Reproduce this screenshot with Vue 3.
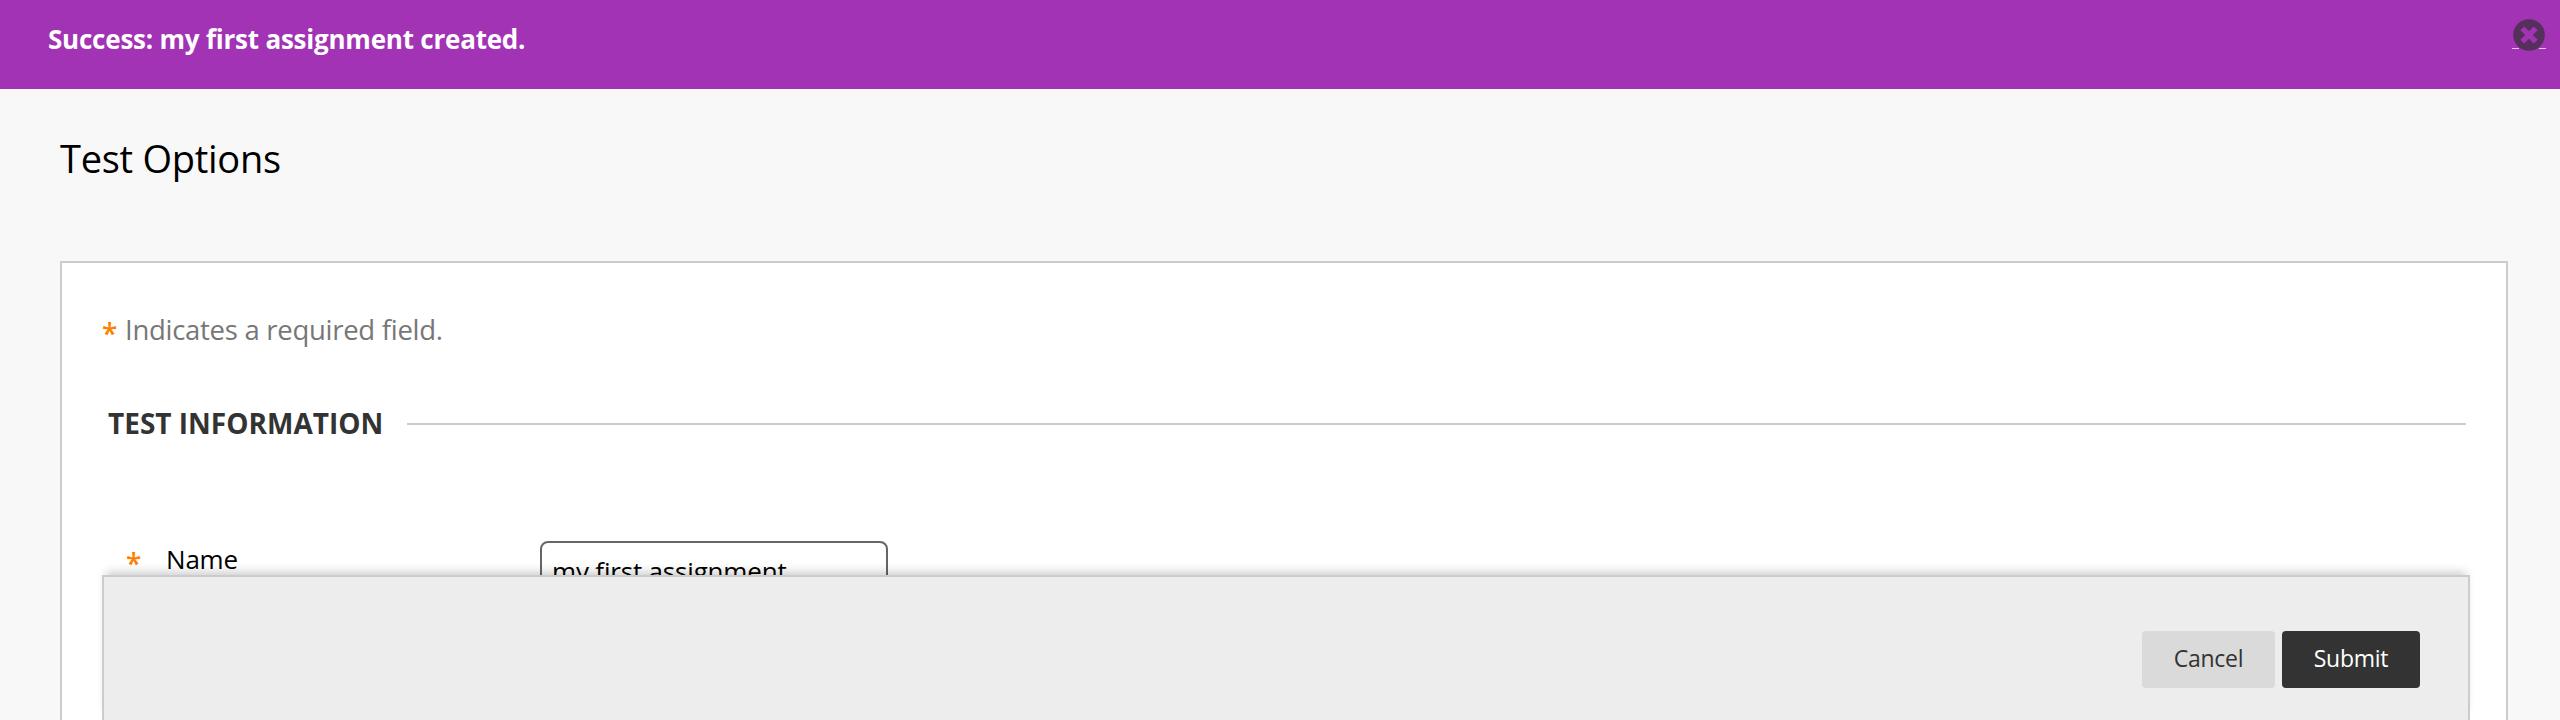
<script setup>
import { ref } from 'vue'

const name = ref('my first assignment')
</script>

<template>
  <div class="page">
    <header class="notice">
      <p class="notice-text">Success: my first assignment created.</p>
      <a class="close" aria-label="Close">
        <svg width="34" height="32" viewBox="0 0 34 32">
          <path d="M0 29.5H34" stroke="#e3c3e8" stroke-width="1" />
          <path d="M7 29.5H27" stroke="#a233b5" stroke-width="2" />
          <circle cx="17" cy="16" r="15.8" fill="#55305c" />
          <path d="M10.3 9.3L23.7 22.7M23.7 9.3L10.3 22.7" stroke="#a233b5" stroke-width="5.4" />
        </svg>
      </a>
    </header>
    <main class="content">
      <h1 class="title">Test Options</h1>
      <section class="card">
        <p class="required"><span class="star">*</span><span class="required-text">Indicates a required field.</span></p>
        <div class="section-head">
          <h2 class="section-title">TEST INFORMATION</h2>
          <span class="rule"></span>
        </div>
        <div class="field">
          <span class="star field-star">*</span>
          <span class="label">Name</span>
          <div class="input">{{ name }}</div>
        </div>
      </section>
    </main>
    <footer class="actions">
      <button class="btn cancel">Cancel</button>
      <button class="btn submit">Submit</button>
    </footer>
  </div>
</template>

<style>
body {
  margin: 0;
  overflow: hidden;
}
</style>

<style scoped>
.page {
  position: relative;
  box-sizing: border-box;
  height: 720px;
  overflow: hidden;
  display: flex;
  flex-direction: column;
  background: #f8f8f8;
  color: #000;
  font-family: "Open Sans", sans-serif;
}
p, h1, h2 {
  margin: 0;
}
.notice {
  box-sizing: border-box;
  height: 89px;
  flex: none;
  display: flex;
  justify-content: space-between;
  align-items: flex-start;
  padding: 20px 14px 0 48px;
  background: #a233b5;
}
.notice-text {
  color: #fff;
  font-size: 26px;
  font-weight: 700;
  line-height: 38px;
  letter-spacing: -0.22px;
  white-space: nowrap;
}
.close {
  display: flex;
  margin-top: -1px;
}
.content {
  flex: 1;
  display: flex;
  flex-direction: column;
  padding: 43px 52px 0 60px;
}
.title {
  font-size: 38px;
  font-weight: 400;
  line-height: 52px;
  letter-spacing: -0.27px;
  margin-bottom: 77px;
}
.card {
  flex: 1;
  border: 2px solid #ccc;
  border-bottom: 0;
  background: #fff;
  padding: 46px 40px 0;
}
.required {
  display: flex;
  font-size: 27.5px;
  line-height: 40px;
  height: 40px;
  letter-spacing: -0.28px;
  color: #777;
}
.required-text {
  padding-top: 1px;
}
.star {
  color: #ff8000;
  font-size: 28px;
  font-weight: 600;
  letter-spacing: 0;
  width: 23px;
  height: 36px;
  padding-top: 4px;
}
.section-head {
  display: flex;
  align-items: center;
  margin-top: 54px;
  padding-left: 6px;
}
.section-title {
  font-size: 28px;
  line-height: 40px;
  font-weight: 700;
  color: #333;
  width: 299px;
  white-space: nowrap;
}
.rule {
  flex: 1;
  height: 2px;
  margin-top: 2px;
  background: #ccc;
}
.field {
  display: flex;
  align-items: flex-start;
  margin-top: 98px;
  padding-left: 24px;
  font-size: 26px;
  line-height: 36px;
}
.field-star {
  width: 40px;
}
.label {
  width: 374px;
  letter-spacing: -0.2px;
}
.input {
  box-sizing: border-box;
  width: 348px;
  height: 60px;
  border: 2px solid #666;
  border-radius: 8px;
  padding: 10px;
  letter-spacing: -0.18px;
}
.actions {
  position: absolute;
  left: 102px;
  right: 90px;
  bottom: 0;
  height: 145px;
  box-sizing: border-box;
  display: flex;
  justify-content: flex-end;
  align-items: flex-start;
  gap: 7px;
  padding: 54px 48px 0 0;
  border: 2px solid #ccc;
  border-bottom: 0;
  background: #ededed;
  box-shadow: 0 -7px 9px -4px rgba(0, 0, 0, 0.2);
}
.btn {
  height: 57px;
  border: 0;
  border-radius: 4px;
  padding: 0 0 2px;
  font-family: inherit;
  font-size: 23px;
  line-height: 55px;
  letter-spacing: -0.25px;
}
.cancel {
  width: 133px;
  background: #dadada;
  color: #333;
}
.submit {
  width: 138px;
  background: #333;
  color: #fff;
}
</style>
